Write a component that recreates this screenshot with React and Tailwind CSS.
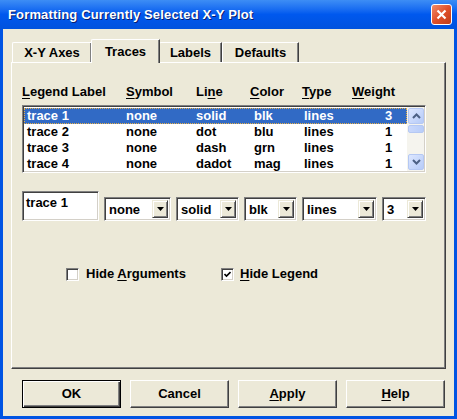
import React from 'react';

const font = "font-['Liberation_Sans',Arial,sans-serif]";

const U = ({ children }) => <span className="underline underline-offset-2">{children}</span>;

const rows = [
  ['trace 1', 'none', 'solid', 'blk', 'lines', '3'],
  ['trace 2', 'none', 'dot', 'blu', 'lines', '1'],
  ['trace 3', 'none', 'dash', 'grn', 'lines', '1'],
  ['trace 4', 'none', 'dadot', 'mag', 'lines', '1'],
];

const Arrow = ({ down }) => (
  <svg width="9" height="6" viewBox="0 0 9 6" className={down ? 'rotate-180' : ''}>
    <path d="M1 5 L4.5 1.5 L8 5" fill="none" stroke="#4d6185" strokeWidth="2" />
  </svg>
);

const Combo = ({ value, w }) => (
  <div className={`${w} h-[24px] flex items-stretch bg-white border border-t-[#808080] border-l-[#808080] border-b-white border-r-white shadow-[inset_1px_1px_0_#404040,inset_-1px_-1px_0_#d4d0c8] p-[2px]`}>
    <div className="flex-1 pl-[2px] pt-[2px] text-[13px] font-bold leading-[16px] text-black">{value}</div>
    <div className="w-[16px] flex items-center justify-center bg-[#ece9d8] border border-t-[#ece9d8] border-l-[#ece9d8] border-r-[#404040] border-b-[#404040] shadow-[inset_1px_1px_0_#fff,inset_-1px_-1px_0_#808080]">
      <svg width="7" height="4" viewBox="0 0 7 4"><path d="M0 0 H7 L3.5 4 Z" fill="#000" /></svg>
    </div>
  </div>
);

const Check = ({ checked }) => (
  <div className="w-[13px] h-[13px] bg-white border border-t-[#808080] border-l-[#808080] border-b-white border-r-white shadow-[inset_1px_1px_0_#404040,inset_-1px_-1px_0_#d4d0c8] flex items-center justify-center">
    {checked && (
      <svg width="7" height="7" viewBox="0 0 7 7"><path d="M0.5 3 L2.5 5 L6.5 1" fill="none" stroke="#000" strokeWidth="1.6" /></svg>
    )}
  </div>
);

const Btn = ({ children, def }) => (
  <div className={`w-[99px] h-[28px] flex items-center justify-center text-[13px] font-bold text-black bg-[#ece9d8] ${def ? 'border border-black shadow-[inset_1px_1px_0_#fff,inset_-1px_-1px_0_#404040,inset_-2px_-2px_0_#808080]' : 'border border-t-white border-l-white border-r-[#404040] border-b-[#404040] shadow-[inset_-1px_-1px_0_#808080]'}`}>
    {children}
  </div>
);

const Tab = ({ label, w, active }) => (
  <div className={`${w} flex items-center justify-center text-[13px] font-bold text-black bg-[#ece9d8] border-t border-l border-t-white border-l-white border-r border-r-[#404040] rounded-tl-[2px] shadow-[inset_-1px_0_0_#808080] ${active ? 'h-[24px] relative z-10 -mb-[1px] -mx-[1px]' : 'h-[20px]'}`}>
    {label}
  </div>
);

export default function App() {
  return (
    <div className={`w-[457px] h-[419px] flex flex-col bg-[#0054e3] ${font}`}>
      {/* title bar */}
      <div className="h-[29px] shrink-0 flex items-center justify-between pl-[8px] pr-[5px] bg-gradient-to-b from-[#3d8df5] via-[#0058ee] to-[#0052de]">
        <span className="text-white font-bold text-[13px] tracking-[0.15px] [text-shadow:1px_1px_0_#0a1e6e]">Formatting Currently Selected X-Y Plot</span>
        <div className="w-[21px] h-[21px] rounded-[3px] border border-white bg-gradient-to-br from-[#f08a68] via-[#e0502a] to-[#c23c18] flex items-center justify-center">
          <svg width="11" height="11" viewBox="0 0 11 11"><path d="M1.5 1.5 L9.5 9.5 M9.5 1.5 L1.5 9.5" stroke="#fff" strokeWidth="2.2" /></svg>
        </div>
      </div>

      {/* client */}
      <div className="flex-1 mx-[3px] mb-[3px] bg-[#ece9d8] flex flex-col px-[8px] pt-[10px]">
        <div className="flex items-end pl-[1px] h-[23px]">
          <Tab label="X-Y Axes" w="w-[80px]" />
          <Tab label="Traces" w="w-[69px]" active />
          <Tab label="Labels" w="w-[63px]" />
          <Tab label="Defaults" w="w-[77px]" />
        </div>

        <div className="h-[307px] border border-t-white border-l-white border-r-[#404040] border-b-[#404040] shadow-[inset_-1px_-1px_0_#808080] flex flex-col pl-[10px] text-[13px] font-bold text-black">
          {/* headers */}
          <div className="flex h-[16px] mt-[21px] leading-[16px]">
            <div className="w-[104px]"><U>L</U>egend Label</div>
            <div className="w-[70px]"><U>S</U>ymbol</div>
            <div className="w-[54px]">Li<U>n</U>e</div>
            <div className="w-[52px]"><U>C</U>olor</div>
            <div className="w-[50px]"><U>T</U>ype</div>
            <div><U>W</U>eight</div>
          </div>

          {/* list */}
          <div className="mt-[5px] w-[404px] h-[68px] flex bg-white border border-t-[#808080] border-l-[#808080] border-b-white border-r-white shadow-[inset_1px_1px_0_#404040,inset_-1px_-1px_0_#d4d0c8] p-[1px]">
            <div className="flex-1 flex flex-col pt-[1px]">
              {rows.map((r, i) => (
                <div key={i} className={`h-[16px] flex leading-[14px] ${i === 0 ? 'bg-[#316ac5] text-white border border-dotted border-[#e8b048]' : 'border border-transparent'}`}>
                  <div className="w-[101px] pl-[2px]">{r[0]}</div>
                  <div className="w-[70px]">{r[1]}</div>
                  <div className="w-[58px]">{r[2]}</div>
                  <div className="w-[50px]">{r[3]}</div>
                  <div className="w-[81px]">{r[4]}</div>
                  <div className="w-[7px] text-right">{r[5]}</div>
                </div>
              ))}
            </div>
            <div className="w-[17px] bg-[#f5f4ee] flex flex-col items-stretch pl-[1px] pt-[1px] pb-[1px]">
              <div className="h-[16px] rounded-[2px] border border-[#b5c8f3] bg-gradient-to-br from-[#dde7ff] to-[#b6cbf8] flex items-center justify-center"><Arrow /></div>
              <div className="h-[8px] mt-[1px] rounded-[2px] border border-[#b5c8f3] bg-gradient-to-r from-[#c9d8fc] to-[#b8cdf9]" />
              <div className="flex-1" />
              <div className="h-[16px] rounded-[2px] border border-[#b5c8f3] bg-gradient-to-br from-[#dde7ff] to-[#b6cbf8] flex items-center justify-center"><Arrow down /></div>
            </div>
          </div>

          {/* edit row */}
          <div className="flex items-end gap-[5px] mt-[18px]">
            <div className="w-[77px] h-[30px] bg-white border border-t-[#808080] border-l-[#808080] border-b-white border-r-white shadow-[inset_1px_1px_0_#404040,inset_-1px_-1px_0_#d4d0c8] pl-[3px] pt-[4px] leading-[14px]">trace 1</div>
            <Combo value="none" w="w-[67px]" />
            <Combo value="solid" w="w-[63px]" />
            <Combo value="blk" w="w-[53px]" />
            <Combo value="lines" w="w-[75px]" />
            <Combo value="3" w="w-[44px]" />
          </div>

          {/* checkboxes */}
          <div className="flex items-center mt-[46px] h-[14px]">
            <div className="w-[199px] flex items-center gap-[7px] pl-[44px]">
              <Check />
              <span>Hide <U>A</U>rguments</span>
            </div>
            <div className="flex items-center gap-[6px]">
              <Check checked />
              <span><U>H</U>ide Legend</span>
            </div>
          </div>
        </div>

        {/* buttons */}
        <div className="flex gap-[9px] pl-[11px] mt-[11px]">
          <Btn def>OK</Btn>
          <Btn>Cancel</Btn>
          <Btn><span><U>A</U>pply</span></Btn>
          <Btn><span><U>H</U>elp</span></Btn>
        </div>
      </div>
    </div>
  );
}
